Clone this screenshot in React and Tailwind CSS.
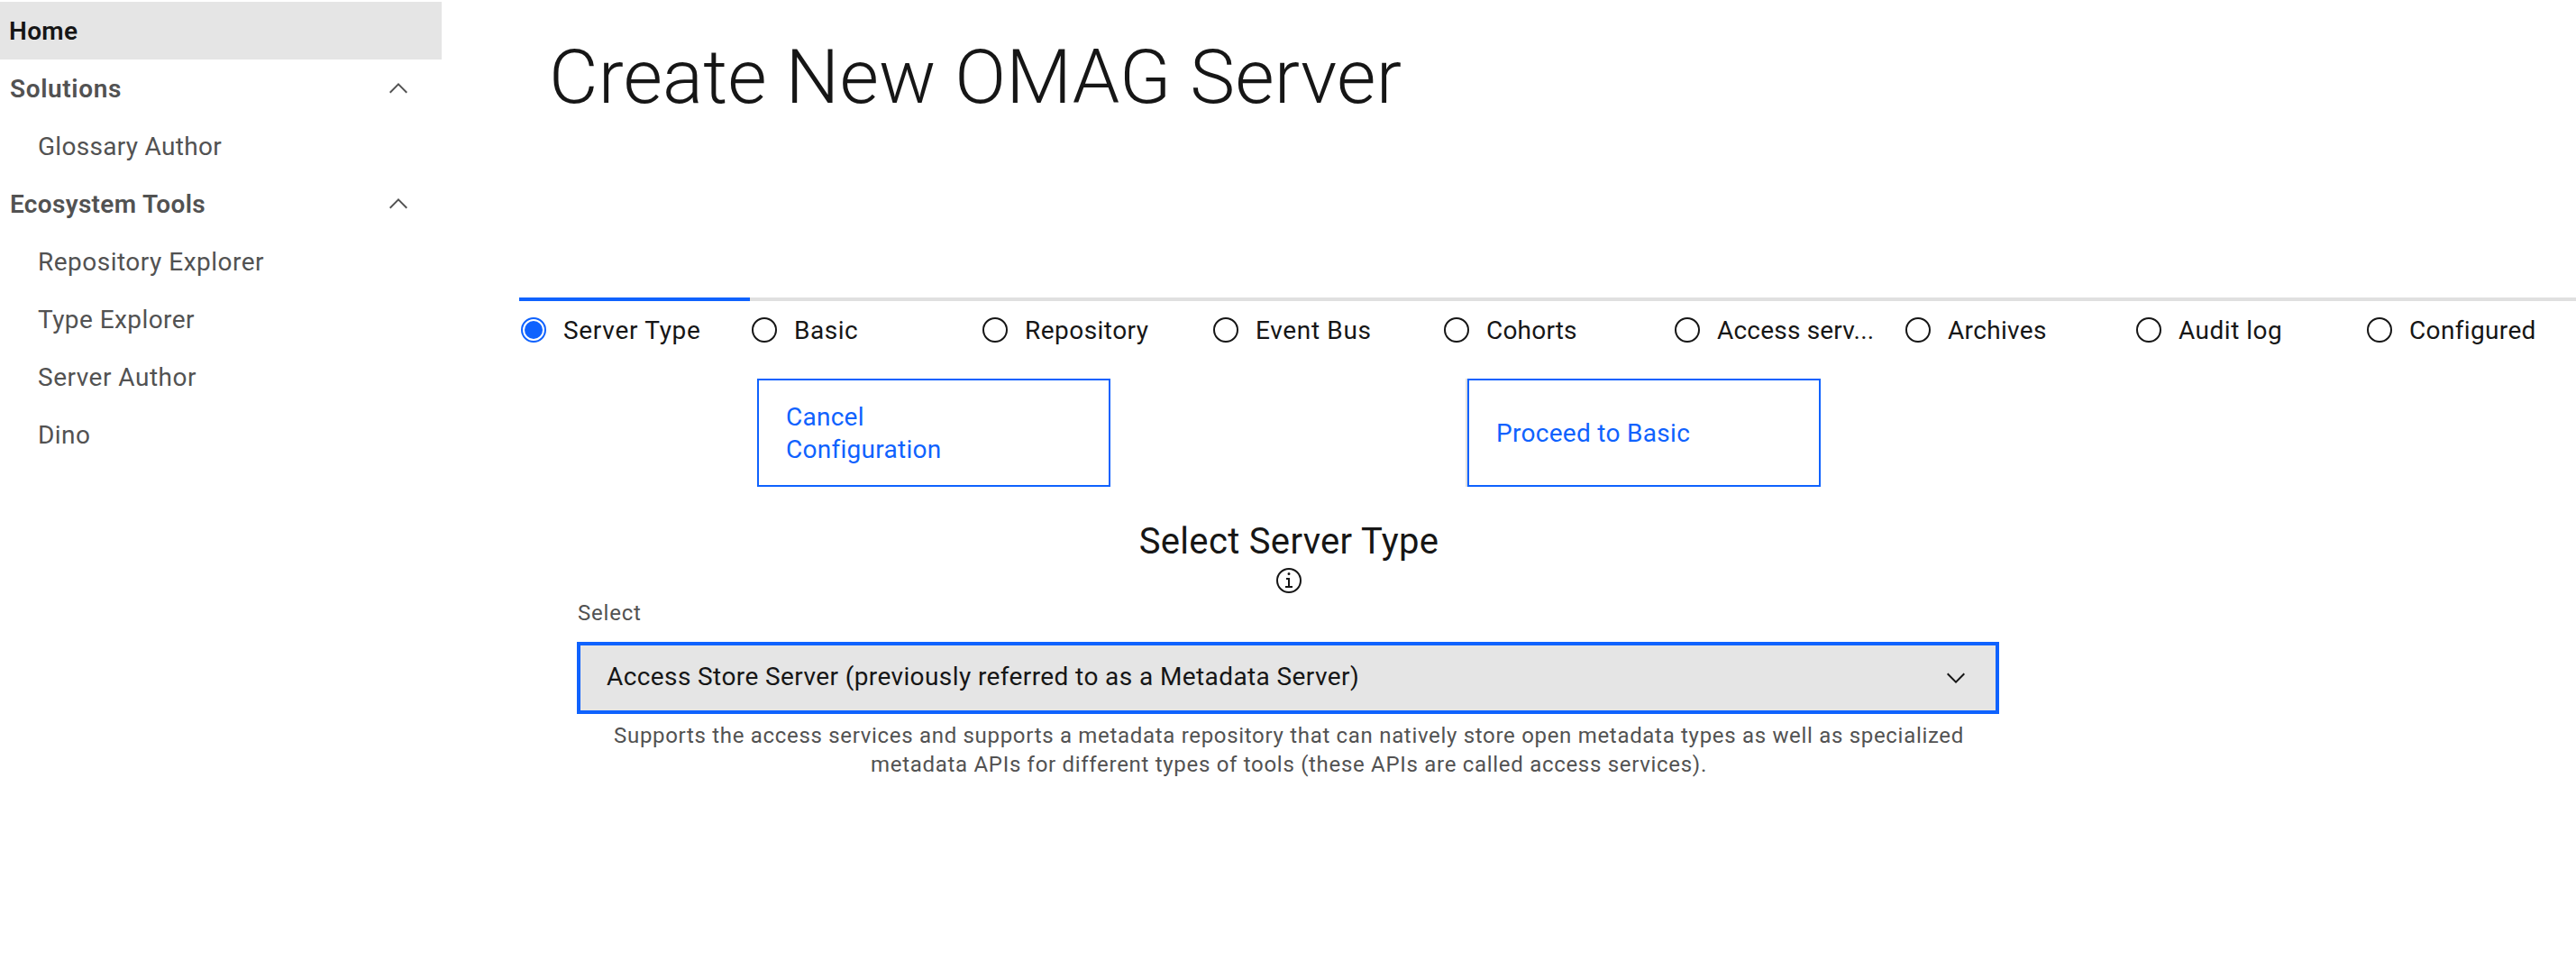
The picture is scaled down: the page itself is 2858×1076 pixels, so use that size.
import React from "react";

const NAV = [
  { label: "Home", kind: "home", spacing: "tracking-[0.34px]" },
  { label: "Solutions", kind: "group", spacing: "tracking-[0.62px]" },
  { label: "Glossary Author", kind: "item", spacing: "tracking-[0.3px]" },
  { label: "Ecosystem Tools", kind: "group", spacing: "tracking-[0.32px]" },
  { label: "Repository Explorer", kind: "item", spacing: "tracking-[0.49px]" },
  { label: "Type Explorer", kind: "item", spacing: "tracking-[0.43px]" },
  { label: "Server Author", kind: "item", spacing: "tracking-[0.5px]" },
  { label: "Dino", kind: "item", spacing: "tracking-[0.45px]" },
];

const NAV_STYLE = {
  home: "bg-[#e5e5e5] pl-[10px] font-semibold text-[#161616]",
  group: "pl-[11px] font-semibold text-[#525252]",
  item: "pl-[42px] text-[#525252]",
};

const STEPS = [
  { label: "Server Type", spacing: "tracking-[0.7px]", current: true },
  { label: "Basic", spacing: "tracking-[0.5px]" },
  { label: "Repository", spacing: "tracking-[0.46px]" },
  { label: "Event Bus", spacing: "tracking-[0.66px]" },
  { label: "Cohorts", spacing: "tracking-[0.2px]" },
  { label: "Access serv...", spacing: "tracking-[0.2px]" },
  { label: "Archives", spacing: "tracking-[0.34px]" },
  { label: "Audit log", spacing: "tracking-[0.5px]" },
  { label: "Configured", spacing: "tracking-[0.35px]" },
];

function Chevron({ up }) {
  return (
    <svg viewBox="0 0 16 16" className="size-8 shrink-0" fill="currentColor">
      <path d={up ? "M8 5L13 10 12.3 10.7 8 6.4 3.7 10.7 3 10z" : "M8 11L3 6 3.7 5.3 8 9.6 12.3 5.3 13 6z"} />
    </svg>
  );
}

function InfoIcon() {
  return (
    <svg viewBox="0 0 16 16" className="size-8" fill="currentColor">
      <path d="M8.5 11V6.5h-2v1h1V11H6v1h4v-1zM8 3.5a.75.75 0 1 0 0 1.5.75.75 0 0 0 0-1.5z" />
      <path d="M8 15A7 7 0 1 1 8 1a7 7 0 0 1 0 14zM8 2a6 6 0 1 0 0 12A6 6 0 0 0 8 2z" />
    </svg>
  );
}

function StepIcon({ current }) {
  return (
    <svg viewBox="0 0 32 32" className={current ? "size-8 shrink-0 text-[#0f62fe]" : "size-8 shrink-0 text-[#161616]"}>
      <circle cx="16" cy="16" r="13" fill="none" stroke="currentColor" strokeWidth="2" />
      {current && <circle cx="16" cy="16" r="10" fill="currentColor" />}
    </svg>
  );
}

function Step({ label, spacing, current }) {
  return (
    <li className={`flex h-[58px] w-64 shrink-0 border-t-4 pt-4 ${current ? "border-[#0f62fe]" : "border-[#e0e0e0]"}`}>
      <StepIcon current={current} />
      <span className={`-mt-px ml-[17px] whitespace-nowrap text-[28px] leading-9 ${spacing}`}>{label}</span>
    </li>
  );
}

export default function App() {
  return (
    <div className="flex h-[1076px] w-full overflow-hidden bg-white font-[Roboto,sans-serif] text-[#161616]">
      <nav className="w-[490px] shrink-0 pt-0.5">
        {NAV.map(({ label, kind, spacing }) => (
          <a key={label} className={`flex h-16 items-center justify-between pr-8 text-[28px] leading-9 ${NAV_STYLE[kind]}`}>
            <span className={`pt-0.5 ${spacing}`}>{label}</span>
            {kind === "group" && <Chevron up />}
          </a>
        ))}
      </nav>

      <main className="ml-[86px] min-w-0 flex-1">
        <h1 className="ml-[33px] pt-9 text-[84px] leading-[100px] font-light tracking-[0.16px]">Create New OMAG Server</h1>

        <ol className="mt-[194px] flex w-[2304px]">
          {STEPS.map((step) => (
            <Step key={step.label} {...step} />
          ))}
        </ol>

        <div className="mt-8 ml-[264px] flex gap-[396px] text-[28px] leading-9 text-[#0f62fe]">
          <button className="h-[120px] w-[392px] border-2 border-[#0f62fe] pt-0.5 pl-[30px] text-left">
            <span className="block tracking-[0.25px]">Cancel</span>
            <span className="block tracking-[0.28px]">Configuration</span>
          </button>
          <button className="h-[120px] w-[392px] border-2 border-[#0f62fe] pt-0.5 pl-[30px] text-left tracking-[0.3px] shadow-[-2px_0_0_#e0e0e0]">
            Proceed to Basic
          </button>
        </div>

        <section className="mt-8 ml-16 flex w-[1578px] flex-col">
          <h4 className="pt-0.5 pl-0.5 text-center text-[40px] leading-[54px] tracking-[0.32px]">Select Server Type</h4>
          <div className="flex justify-center pl-0.5">
            <InfoIcon />
          </div>
          <label className="mt-1 pl-px text-2xl tracking-[0.78px] text-[#525252]">Select</label>
          <div className="mt-4 flex h-20 items-center justify-between border-4 border-[#0f62fe] bg-[#e5e5e5] pr-7 pl-[29px]">
            <span className="-mt-0.5 text-[28px] leading-9 tracking-[0.4px]">
              Access Store Server (previously referred to as a Metadata Server)
            </span>
            <Chevron />
          </div>
          <p className="mt-2 pl-0.5 text-center text-2xl whitespace-nowrap text-[#525252]">
            <span className="block tracking-[0.69px]">
              Supports the access services and supports a metadata repository that can natively store open metadata types as well as specialized
            </span>
            <span className="block tracking-[0.7px]">
              metadata APIs for different types of tools (these APIs are called access services).
            </span>
          </p>
        </section>
      </main>
    </div>
  );
}
